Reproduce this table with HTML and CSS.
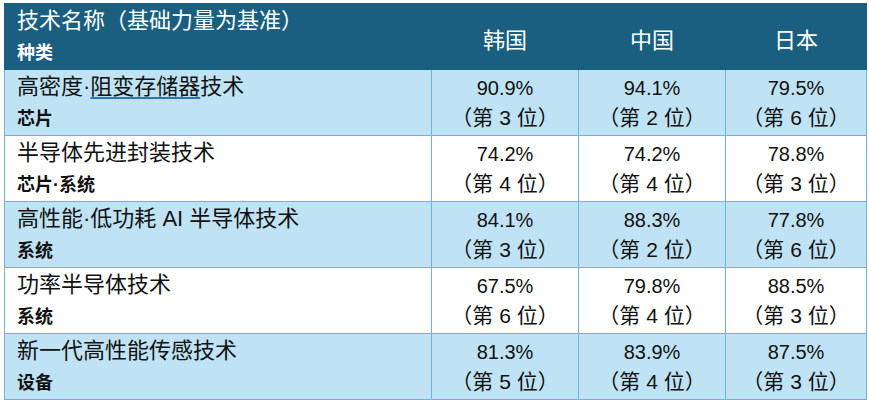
FILE: index.html
```html
<!DOCTYPE html>
<html lang="zh">
<head>
<meta charset="utf-8">
<title>技术名称</title>
<link rel="stylesheet" href="styles.css">
</head>
<body>
<div class="wrap">
<table class="tbl">
  <colgroup>
    <col class="c1"><col class="c2"><col class="c3"><col class="c4">
  </colgroup>
  <thead>
    <tr>
      <th class="name"><div class="title">技术名称（基础力量为基准）</div><div class="sub">种类</div></th>
      <th class="country">韩国</th>
      <th class="country">中国</th>
      <th class="country">日本</th>
    </tr>
  </thead>
  <tbody>
    <tr class="blue">
      <td class="name"><div class="title">高密度·<span class="ul">阻变存储器</span>技术</div><div class="sub">芯片</div></td>
      <td class="val"><div class="pct">90.9%</div><div class="rank">（第 3 位）</div></td>
      <td class="val"><div class="pct">94.1%</div><div class="rank">（第 2 位）</div></td>
      <td class="val"><div class="pct">79.5%</div><div class="rank">（第 6 位）</div></td>
    </tr>
    <tr class="white">
      <td class="name"><div class="title">半导体先进封装技术</div><div class="sub">芯片·系统</div></td>
      <td class="val"><div class="pct">74.2%</div><div class="rank">（第 4 位）</div></td>
      <td class="val"><div class="pct">74.2%</div><div class="rank">（第 4 位）</div></td>
      <td class="val"><div class="pct">78.8%</div><div class="rank">（第 3 位）</div></td>
    </tr>
    <tr class="blue">
      <td class="name"><div class="title">高性能·低功耗 AI 半导体技术</div><div class="sub">系统</div></td>
      <td class="val"><div class="pct">84.1%</div><div class="rank">（第 3 位）</div></td>
      <td class="val"><div class="pct">88.3%</div><div class="rank">（第 2 位）</div></td>
      <td class="val"><div class="pct">77.8%</div><div class="rank">（第 6 位）</div></td>
    </tr>
    <tr class="white">
      <td class="name"><div class="title">功率半导体技术</div><div class="sub">系统</div></td>
      <td class="val"><div class="pct">67.5%</div><div class="rank">（第 6 位）</div></td>
      <td class="val"><div class="pct">79.8%</div><div class="rank">（第 4 位）</div></td>
      <td class="val"><div class="pct">88.5%</div><div class="rank">（第 3 位）</div></td>
    </tr>
    <tr class="blue">
      <td class="name"><div class="title">新一代高性能传感技术</div><div class="sub">设备</div></td>
      <td class="val"><div class="pct">81.3%</div><div class="rank">（第 5 位）</div></td>
      <td class="val"><div class="pct">83.9%</div><div class="rank">（第 4 位）</div></td>
      <td class="val"><div class="pct">87.5%</div><div class="rank">（第 3 位）</div></td>
    </tr>
  </tbody>
</table>
</div>
</body>
</html>
```

FILE: styles.css
```css
html, body {
  margin: 0;
  padding: 0;
  background: #ffffff;
}
body {
  font-family: "Liberation Sans", "Noto Sans CJK SC", sans-serif;
  color: #111111;
}
.wrap {
  padding: 3px 0 0 4px;
}
.tbl {
  border-collapse: collapse;
  table-layout: fixed;
  width: 862px;
}
.c1 { width: 427px; }
.c2 { width: 147px; }
.c3 { width: 147px; }
.c4 { width: 141px; }

.tbl th, .tbl td {
  padding: 0;
  height: 66px;
  box-sizing: border-box;
  border: 1px solid #6bb5dd;
  vertical-align: top;
  font-weight: normal;
}
.tbl thead th {
  background: #1a5f80;
  color: #ffffff;
  border-color: #1a5f80;
}
.tbl th.country {
  vertical-align: middle;
  text-align: center;
  font-size: 22px;
  font-family: "Noto Sans CJK SC", sans-serif;
  padding-top: 2px;
}
.name {
  text-align: left;
  padding: 1px 0 0 12px !important;
}
.title {
  font-size: 22px;
  line-height: 32px;
  white-space: nowrap;
}
.sub {
  font-size: 18px;
  font-weight: bold;
  line-height: 32px;
}
.ul {
  text-decoration: underline;
  text-decoration-color: #2f75b5;
  text-underline-offset: 3px;
}
.blue td { background: #bfe3f4; }
.white td { background: #ffffff; }
.val {
  text-align: center;
  padding-top: 3px !important;
}
.pct {
  font-size: 20px;
  line-height: 30px;
}
.rank {
  font-size: 21px;
  line-height: 30px;
}
```
